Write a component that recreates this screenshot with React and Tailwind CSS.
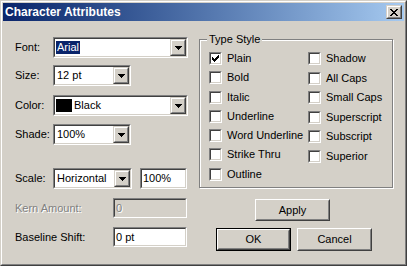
import React from "react";

const Sunken = ({ className = "", inner = "", children }) => (
  <div className={`border border-t-[#808080] border-l-[#808080] border-b-white border-r-white ${className}`}>
    <div className={`h-full w-full border border-t-[#404040] border-l-[#404040] border-b-[#d4d0c8] border-r-[#d4d0c8] ${inner}`}>
      {children}
    </div>
  </div>
);

const RaisedSmall = ({ className = "", children }) => (
  <div className={`border border-t-[#d4d0c8] border-l-[#d4d0c8] border-b-[#404040] border-r-[#404040] bg-[#d4d0c8] ${className}`}>
    <div className="h-full w-full border border-t-white border-l-white border-b-[#808080] border-r-[#808080] flex items-center justify-center">
      {children}
    </div>
  </div>
);

const Arrow = () => (
  <svg width="7" height="4" viewBox="0 0 7 4" className="block">
    <path d="M0 0h7v1h-1v1h-1v1h-1v1h-1v-1h-1v-1h-1v-1h-1z" fill="#000" />
  </svg>
);

const Combo = ({ width, children }) => (
  <Sunken className={`${width} h-[21px]`} inner="bg-white flex items-center justify-between">
    <div className="flex items-center h-full">{children}</div>
    <RaisedSmall className="w-[16px] h-[17px]">
      <Arrow />
    </RaisedSmall>
  </Sunken>
);

const Check = () => (
  <svg width="7" height="7" viewBox="0 0 7 7" className="block ml-[1px] mt-[1px]">
    <path
      d="M0 2h1v3h-1z M1 3h1v3h-1z M2 4h1v3h-1z M3 3h1v3h-1z M4 2h1v3h-1z M5 1h1v3h-1z M6 0h1v3h-1z"
      fill="#000"
    />
  </svg>
);

const CheckBox = ({ label, checked }) => (
  <div className="flex items-start h-[19.5px]">
    <Sunken className="w-[13px] h-[13px] shrink-0" inner="bg-white">
      {checked ? <Check /> : null}
    </Sunken>
    <span className="ml-[5px] text-[11px] leading-[13px] text-black whitespace-nowrap">{label}</span>
  </div>
);

const Button = ({ label, def, className = "" }) => {
  const face = (
    <div className="h-full w-full border border-t-white border-l-white border-b-[#404040] border-r-[#404040] bg-[#d4d0c8]">
      <div className="h-full w-full border border-t-[#d4d0c8] border-l-[#d4d0c8] border-b-[#808080] border-r-[#808080] flex items-center justify-center text-[11px] text-black">
        {label}
      </div>
    </div>
  );
  if (def) {
    return <div className={`border border-black ${className}`}>{face}</div>;
  }
  return <div className={className}>{face}</div>;
};

export default function App() {
  return (
    <div className="w-[407px] h-[266px] font-['Liberation_Sans',Arial,sans-serif] bg-[#d4d0c8]">
      <div className="w-full h-full border border-t-[#d4d0c8] border-l-[#d4d0c8] border-b-[#404040] border-r-[#404040]">
        <div className="w-full h-full border border-t-white border-l-white border-b-[#808080] border-r-[#808080] p-[1px] flex flex-col">
          {/* Title bar */}
          <div className="h-[18px] shrink-0 bg-linear-to-r from-[#0a246a] to-[#a6caf0] flex items-center justify-between pl-[2px] pr-[2px]">
            <span className="text-white font-bold text-[12px] leading-none">Character Attributes</span>
            <RaisedSmall className="w-[16px] h-[14px]">
              <svg width="8" height="7" viewBox="0 0 8 7" className="block">
                <path
                  d="M0 0h2v1h-2z M6 0h2v1h-2z M1 1h2v1h-2z M5 1h2v1h-2z M2 2h4v1h-4z M3 3h2v1h-2z M2 4h4v1h-4z M1 5h2v1h-2z M5 5h2v1h-2z M0 6h2v1h-2z M6 6h2v1h-2z"
                  fill="#000"
                />
              </svg>
            </RaisedSmall>
          </div>

          {/* Content */}
          <div className="flex flex-1 text-[11px] text-black">
            {/* Left column */}
            <div className="w-[196px] shrink-0 pl-[12px] pt-[16px] flex flex-col">
              <div className="flex items-center h-[21px]">
                <span className="w-[38px]">Font:</span>
                <Combo width="w-[135px]">
                  <span className="ml-[1px] px-[1px] bg-[#0a246a] text-white leading-[13px]">Arial</span>
                </Combo>
              </div>
              <div className="flex items-center h-[21px] mt-[7px]">
                <span className="w-[38px]">Size:</span>
                <Combo width="w-[78px]">
                  <span className="ml-[2px]">12 pt</span>
                </Combo>
              </div>
              <div className="flex items-center h-[21px] mt-[9px]">
                <span className="w-[38px]">Color:</span>
                <Combo width="w-[135px]">
                  <span className="ml-[1px] w-[16px] h-[13px] bg-black"></span>
                  <span className="ml-[2px]">Black</span>
                </Combo>
              </div>
              <div className="flex items-center h-[21px] mt-[8px]">
                <span className="w-[38px]">Shade:</span>
                <Combo width="w-[78px]">
                  <span className="ml-[2px]">100%</span>
                </Combo>
              </div>
              <div className="flex items-center h-[21px] mt-[23px]">
                <span className="w-[38px]">Scale:</span>
                <Combo width="w-[79px]">
                  <span className="ml-[2px]">Horizontal</span>
                </Combo>
                <Sunken className="w-[47px] h-[21px] ml-[8px]" inner="bg-white flex items-center">
                  <span className="ml-[1px]">100%</span>
                </Sunken>
              </div>
              <div className="flex items-center h-[20px] mt-[9px]">
                <span className="w-[98px] text-[#808080] [text-shadow:1px_1px_0_#ffffff]">Kern Amount:</span>
                <Sunken className="w-[74px] h-[20px]" inner="bg-[#d4d0c8] flex items-center">
                  <span className="ml-[1px] text-[#808080] [text-shadow:1px_1px_0_#ffffff]">0</span>
                </Sunken>
              </div>
              <div className="flex items-center h-[20px] mt-[9px]">
                <span className="w-[98px]">Baseline Shift:</span>
                <Sunken className="w-[74px] h-[20px]" inner="bg-white flex items-center">
                  <span className="ml-[1px]">0 pt</span>
                </Sunken>
              </div>
            </div>

            {/* Right column */}
            <div className="flex flex-col pt-[18px]">
              <div className="relative w-[194px] h-[149px] border border-[#808080] shadow-[inset_1px_1px_0_#ffffff,1px_1px_0_#ffffff] pl-[9px] pt-[12px] flex">
                <span className="absolute left-[7px] top-[-7px] px-[2px] bg-[#d4d0c8] leading-[13px]">Type Style</span>
                <div className="w-[99px] flex flex-col">
                  <CheckBox label="Plain" checked />
                  <CheckBox label="Bold" />
                  <CheckBox label="Italic" />
                  <CheckBox label="Underline" />
                  <CheckBox label="Word Underline" />
                  <CheckBox label="Strike Thru" />
                  <CheckBox label="Outline" />
                </div>
                <div className="flex flex-col">
                  <CheckBox label="Shadow" />
                  <CheckBox label="All Caps" />
                  <CheckBox label="Small Caps" />
                  <CheckBox label="Superscript" />
                  <CheckBox label="Subscript" />
                  <CheckBox label="Superior" />
                </div>
              </div>
              <Button label="Apply" className="w-[75px] h-[22px] mt-[11px] ml-[56px]" />
              <div className="flex mt-[7px] ml-[17px]">
                <Button label="OK" def className="w-[75px] h-[23px]" />
                <Button label="Cancel" className="w-[75px] h-[23px] ml-[6px]" />
              </div>
            </div>
          </div>
        </div>
      </div>
    </div>
  );
}
